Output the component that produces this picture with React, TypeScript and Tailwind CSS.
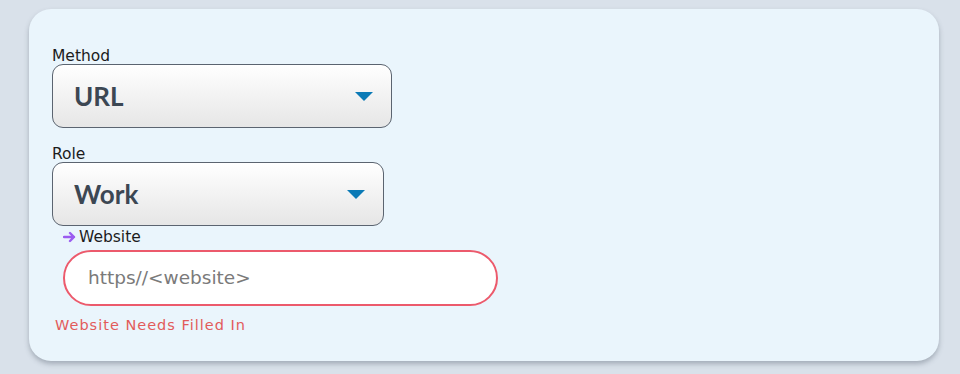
import React from "react";

const labelFont = { fontFamily: '"DejaVu Sans", "Noto Sans", sans-serif' };

function Select({ label, value, width }: { label: string; value: string; width: string }) {
  return (
    <div className="flex flex-col">
      <label className="text-[15.5px] leading-[16px] text-[#1c1c1c]" style={labelFont}>
        {label}
      </label>
      <div
        className={`${width} h-[64px] flex items-center justify-between pl-[21px] pr-[18px] rounded-[11px] border border-[#5b6470] bg-gradient-to-b from-white to-[#e6e6e6]`}
      >
        <span
          className="text-[26px] font-bold text-[#3c4753]"
          style={{ fontFamily: 'Lato, "Open Sans", sans-serif' }}
        >
          {value}
        </span>
        <svg width="18" height="9" viewBox="0 0 18 9">
          <polygon points="0,0 18,0 9,9" fill="#0b7ab6" />
        </svg>
      </div>
    </div>
  );
}

export default function App() {
  return (
    <div className="w-[960px] h-[374px] bg-[#d9e1ea] pt-[9px] pl-[29px]">
      <div className="w-[910px] h-[352px] bg-[#eaf5fc] rounded-[22px] shadow-[0_3px_5px_rgba(100,110,125,0.45)] pt-[39px] pl-[23px]">
        <div className="flex flex-col gap-[18px]">
          <Select label="Method" value="URL" width="w-[340px]" />
          <Select label="Role" value="Work" width="w-[332px]" />
        </div>
        <div className="mt-[3px] pl-[11px] flex items-center gap-[3px]">
          <svg width="13" height="12" viewBox="0 0 13 12">
            <path d="M1 6 H11 M7 2 L11 6 L7 10" stroke="#9b5cf0" strokeWidth="2.4" fill="none" strokeLinecap="round" strokeLinejoin="round" />
          </svg>
          <span className="text-[15.5px] leading-[16px] text-[#1c1c1c]" style={labelFont}>
            Website
          </span>
        </div>
        <div className="ml-[11px] mt-[5px] w-[435px] h-[56px] rounded-full border-2 border-[#ec5a6c] bg-white flex items-center pl-[23px]">
          <span className="text-[18.5px] text-[#7a7a7a]" style={labelFont}>
            https//&lt;website&gt;
          </span>
        </div>
        <div
          className="mt-[10px] ml-[3px] text-[14.5px] leading-[18px] tracking-[1px] text-[#e25b5b]"
          style={labelFont}
        >
          Website Needs Filled In
        </div>
      </div>
    </div>
  );
}
